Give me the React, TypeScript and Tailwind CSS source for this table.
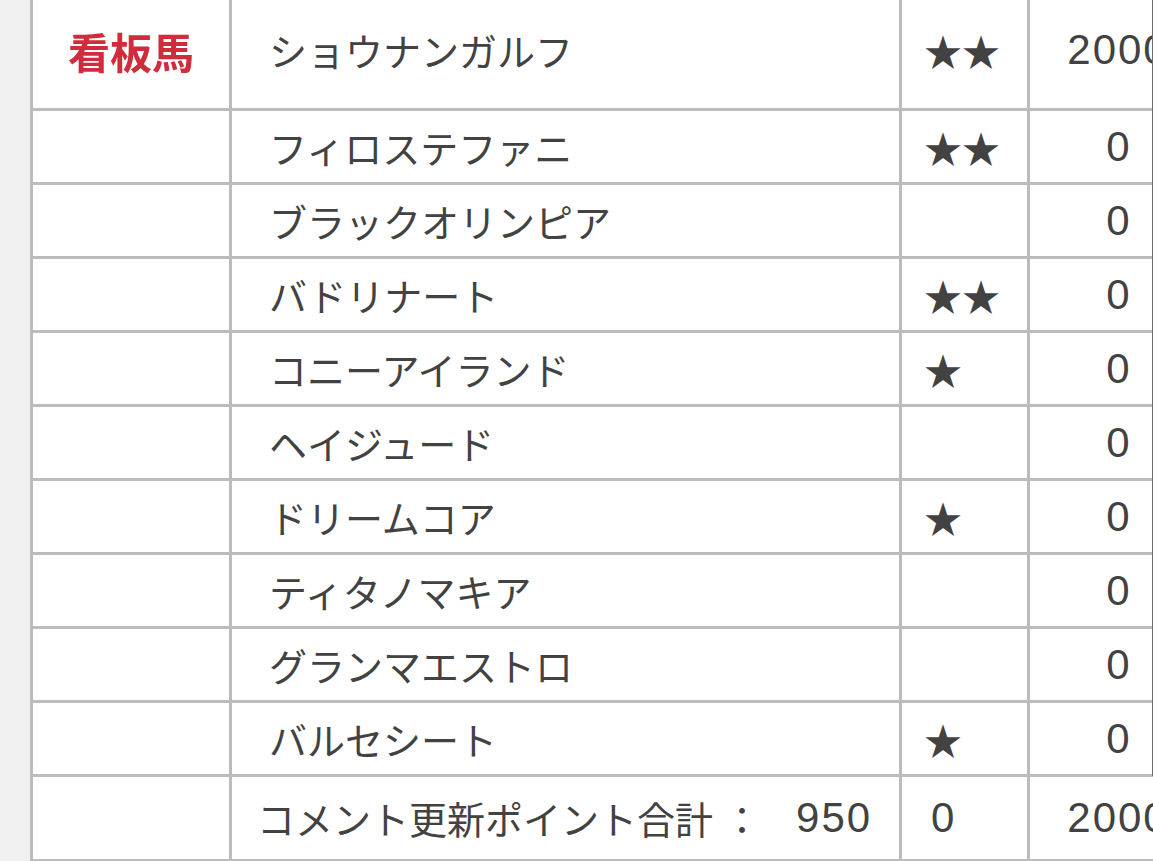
const font = { fontFamily: '"Noto Sans CJK JP", "Noto Sans", sans-serif' };
const digits = { fontFamily: '"Liberation Sans", Arial, sans-serif' };

type Row = { name: string; stars: number; pts: string };

const rows: Row[] = [
  { name: 'フィロステファニ', stars: 2, pts: '0' },
  { name: 'ブラックオリンピア', stars: 0, pts: '0' },
  { name: 'バドリナート', stars: 2, pts: '0' },
  { name: 'コニーアイランド', stars: 1, pts: '0' },
  { name: 'ヘイジュード', stars: 0, pts: '0' },
  { name: 'ドリームコア', stars: 1, pts: '0' },
  { name: 'ティタノマキア', stars: 0, pts: '0' },
  { name: 'グランマエストロ', stars: 0, pts: '0' },
  { name: 'バルセシート', stars: 1, pts: '0' },
];

function Num({ children }: { children: string }) {
  return (
    <span className="text-[42px] tracking-[2px]" style={digits}>
      {children}
    </span>
  );
}

function HorseRow({ row }: { row: Row }) {
  return (
    <div className="flex h-[74px] border-b-[3px] border-[#bcbcbc]">
      <div className="w-[199px] shrink-0 border-r-[3px] border-[#bcbcbc]" />
      <div className="w-[670px] shrink-0 border-r-[3px] border-[#bcbcbc] flex items-center pl-[37px]">
        {row.name}
      </div>
      <div className="w-[128px] shrink-0 border-r-[3px] border-[#bcbcbc] flex items-center pl-[22px]">
        {'★'.repeat(row.stars)}
      </div>
      <div className="w-[176px] shrink-0 flex items-center justify-center pl-[2px]">
        <Num>{row.pts}</Num>
      </div>
    </div>
  );
}

export default function App() {
  return (
    <div
      className="relative w-[1153px] h-[861px] overflow-hidden bg-[#f0f0f0] text-[38px] leading-none text-[#424242]"
      style={font}
    >
      <div className="ml-[30px] w-[1180px] bg-white border-l-[3px] border-[#bcbcbc]">
        <div className="flex h-[111px] border-b-[3px] border-[#bcbcbc]">
          <div className="w-[199px] shrink-0 border-r-[3px] border-[#bcbcbc] flex items-center justify-center pb-[6px]">
            <span className="text-[42px] font-bold text-[#d12c3c] blur-[0.6px]">看板馬</span>
          </div>
          <div className="w-[670px] shrink-0 border-r-[3px] border-[#bcbcbc] flex items-center pl-[37px] pb-[8px]">
            ショウナンガルフ
          </div>
          <div className="w-[128px] shrink-0 border-r-[3px] border-[#bcbcbc] flex items-center pl-[22px] pb-[8px]">
            ★★
          </div>
          <div className="w-[176px] shrink-0 flex items-center justify-center pb-[8px]">
            <Num>2000</Num>
          </div>
        </div>

        {rows.map((r) => (
          <HorseRow key={r.name} row={r} />
        ))}

        <div className="flex h-[85px] border-b-[3px] border-[#bcbcbc]">
          <div className="w-[199px] shrink-0 border-r-[3px] border-[#bcbcbc]" />
          <div className="w-[670px] shrink-0 border-r-[3px] border-[#bcbcbc] flex items-center pl-[25px]">
            <span>コメント更新ポイント合計</span>
            <span className="ml-[10px]">：</span>
            <span className="ml-[35px]">
              <Num>950</Num>
            </span>
          </div>
          <div className="w-[128px] shrink-0 border-r-[3px] border-[#bcbcbc] flex items-center pl-[29px]">
            <Num>0</Num>
          </div>
          <div className="w-[176px] shrink-0 flex items-center justify-center">
            <Num>2000</Num>
          </div>
        </div>
      </div>

      <div className="absolute left-[1152px] top-0 h-[776px] w-px bg-[#6b6b6b]" />
    </div>
  );
}
